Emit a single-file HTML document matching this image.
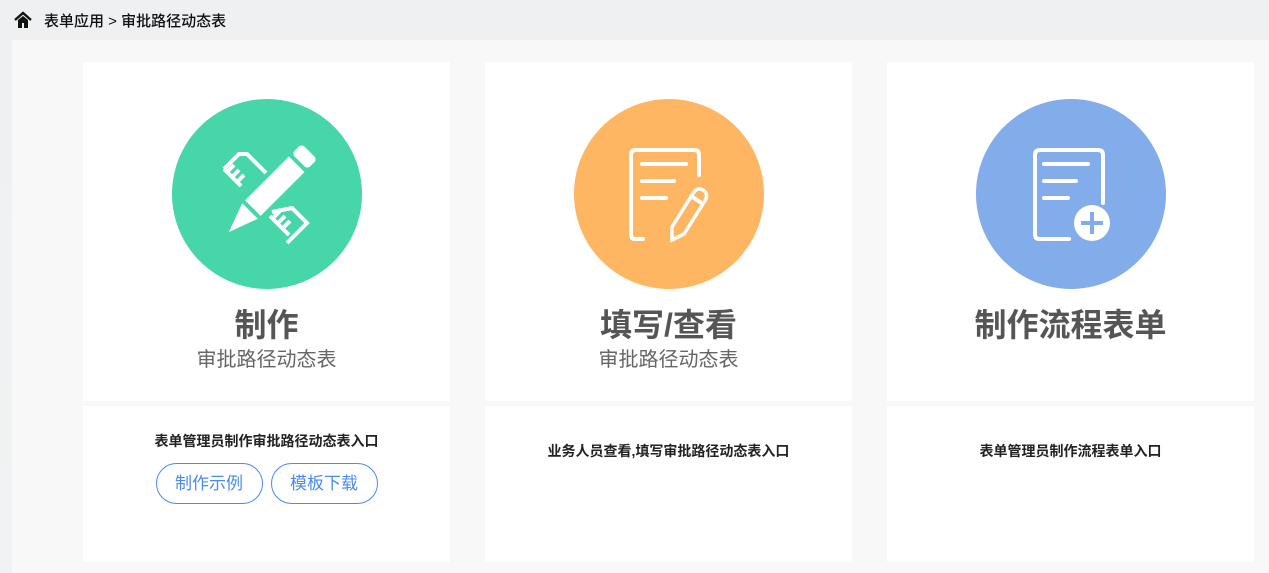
<!DOCTYPE html>
<html><head><meta charset="utf-8"><style>
*{margin:0;padding:0;box-sizing:border-box}
body{width:1269px;height:573px;overflow:hidden;background:linear-gradient(180deg,#eef0f1,#f1f2f3);font-family:"Liberation Sans","Noto Sans CJK SC",sans-serif;position:relative}
.crumb{position:absolute;left:14px;top:10px;font-size:15px;color:#111;display:flex;align-items:center;height:20px;font-weight:500}
.crumb svg{margin-right:12px}
.wrap{position:absolute;left:12px;top:40px;width:1257px;height:533px;background:#f8f8f8}
.card{position:absolute;top:22px;width:367px;height:500px}
.top{position:absolute;left:0;top:0;width:367px;height:339px;background:#fff;text-align:center}
.bot{position:absolute;left:0;top:344px;width:367px;height:156px;background:#fff;text-align:center}
.circle{position:absolute;left:89px;top:37px;width:190px;height:190px;border-radius:50%}
.t1{position:absolute;left:0;right:0;top:238px;font-size:32px;font-weight:bold;color:#555}
.t2{position:absolute;left:0;right:0;top:281px;font-size:20px;color:#666}
.desc{font-size:14px;color:#222;margin-top:25px;font-weight:bold}
.btn{display:inline-block;width:107px;height:41px;border:1px solid #4a8af4;border-radius:21px;color:#4a8af4;font-size:17px;line-height:39px;margin:0 4px}
</style></head><body>
<div class="crumb"><svg width="18" height="18" viewBox="0 0 18 18"><path d="M1 9L9 2l8 7" fill="none" stroke="#111" stroke-width="2.4"/><path d="M4 9v8h4v-5h2v5h4V9L9 5z" fill="#111"/></svg>表单应用 &gt; 审批路径动态表</div>
<div class="wrap">
<div class="card" style="left:71px">
 <div class="top">
  <div class="circle" style="background:#47d5aa">
   <svg width="190" height="190" viewBox="0 0 190 190">
    <g fill="none" stroke="#fff" stroke-width="4">
     <path d="M52 70L67 55h8l19 19"/>
     <path d="M52 70l17 17"/><path d="M62 66l-6 6M67 71l-6 6M72 76l-6 6"/>
     <path d="M100 113l20-4 15 15-20 20"/>
     <path d="M98 117l19 19"/><path d="M108 112l-6 6M113 117l-6 6M118 122l-6 6"/>
    </g>
    <g fill="#fff" transform="rotate(45 95 95)">
     <rect x="84" y="35" width="22" height="14" rx="4"/>
     <rect x="84" y="53" width="22" height="62"/>
     <path d="M84 119h22l-11 30z"/>
    </g>
   </svg>
  </div>
  <div class="t1">制作</div><div class="t2">审批路径动态表</div>
 </div>
 <div class="bot"><div class="desc">表单管理员制作审批路径动态表入口</div>
  <div style="margin-top:12px"><span class="btn">制作示例</span><span class="btn">模板下载</span></div></div>
</div>
<div class="card" style="left:473px">
 <div class="top">
  <div class="circle" style="background:#ffb662">
   <svg width="190" height="190" viewBox="0 0 190 190">
    <g fill="none" stroke="#fff" stroke-width="4" stroke-linecap="round">
     <path d="M69 140h-8q-4 0-4-5V56q0-5 5-5h58q5 0 5 5v20"/>
     <path d="M68 65h44M68 82h32M68 99h24"/>
     <path d="M98 141l0-13 22-35q4-5 9-2t3 9l-22 35z" stroke-width="3.5"/>
     <path d="M117 97l9 6"/>
    </g>
   </svg>
  </div>
  <div class="t1">填写/查看</div><div class="t2">审批路径动态表</div>
 </div>
 <div class="bot"><div class="desc" style="margin-top:35px">业务人员查看,填写审批路径动态表入口</div></div>
</div>
<div class="card" style="left:875px">
 <div class="top">
  <div class="circle" style="background:#82adea">
   <svg width="190" height="190" viewBox="0 0 190 190">
    <g fill="none" stroke="#fff" stroke-width="4" stroke-linecap="round">
     <path d="M93 140h-30q-4 0-4-5V56q0-5 5-5h58q5 0 5 5v48"/>
     <path d="M68 65h44M68 82h32M68 99h24"/>
    </g>
    <circle cx="116" cy="124" r="18" fill="#fff"/>
    <path d="M116 113v22M105 124h22" stroke="#82adea" stroke-width="4"/>
   </svg>
  </div>
  <div class="t1">制作流程表单</div>
 </div>
 <div class="bot"><div class="desc" style="margin-top:35px">表单管理员制作流程表单入口</div></div>
</div>
</div>
</body></html>
